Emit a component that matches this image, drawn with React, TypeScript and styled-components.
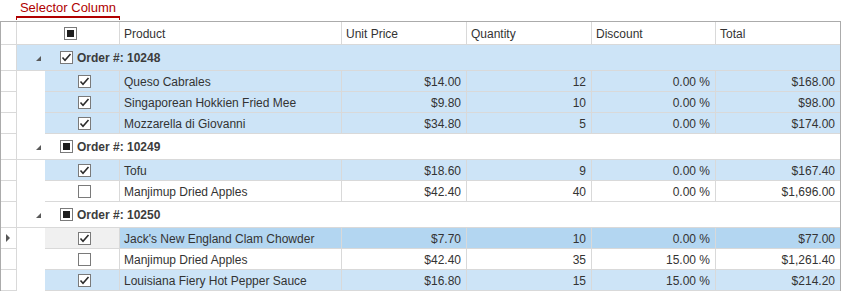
import styled, { createGlobalStyle } from "styled-components";

const GlobalStyle = createGlobalStyle`
  body {
    margin: 0;
    background: #ffffff;
    font-family: "Segoe UI", "Liberation Sans", Arial, sans-serif;
  }
`;

type CheckState = "on" | "off" | "mixed";

type OrderItem = {
  product: string;
  price: string;
  qty: number;
  discount: string;
  total: string;
  checked: boolean;
  focused?: boolean;
};

type Order = {
  id: number;
  state: CheckState;
  items: OrderItem[];
};

const orders: Order[] = [
  {
    id: 10248,
    state: "on",
    items: [
      { product: "Queso Cabrales", price: "$14.00", qty: 12, discount: "0.00 %", total: "$168.00", checked: true },
      { product: "Singaporean Hokkien Fried Mee", price: "$9.80", qty: 10, discount: "0.00 %", total: "$98.00", checked: true },
      { product: "Mozzarella di Giovanni", price: "$34.80", qty: 5, discount: "0.00 %", total: "$174.00", checked: true },
    ],
  },
  {
    id: 10249,
    state: "mixed",
    items: [
      { product: "Tofu", price: "$18.60", qty: 9, discount: "0.00 %", total: "$167.40", checked: true },
      { product: "Manjimup Dried Apples", price: "$42.40", qty: 40, discount: "0.00 %", total: "$1,696.00", checked: false },
    ],
  },
  {
    id: 10250,
    state: "mixed",
    items: [
      { product: "Jack's New England Clam Chowder", price: "$7.70", qty: 10, discount: "0.00 %", total: "$77.00", checked: true, focused: true },
      { product: "Manjimup Dried Apples", price: "$42.40", qty: 35, discount: "15.00 %", total: "$1,261.40", checked: false },
      { product: "Louisiana Fiery Hot Pepper Sauce", price: "$16.80", qty: 15, discount: "15.00 %", total: "$214.20", checked: true },
    ],
  },
];

const LINE = "#d9d9d9";
const SELECTED = "#cde4f7";
const FOCUSED = "#b3d6f1";

const Page = styled.div`
  width: 841px;
  color: #333333;
  font-size: 12px;
`;

const Caption = styled.div`
  height: 21px;
  display: flex;
`;

const CaptionLabel = styled.div`
  position: relative;
  margin-left: 16px;
  width: 104px;
  height: 18px;
  box-sizing: border-box;
  border-bottom: 2px solid #b00000;
  color: #b00000;
  font-size: 13px;
  line-height: 15px;
  text-align: center;

  &::before,
  &::after {
    content: "";
    position: absolute;
    bottom: -4px;
    width: 1px;
    height: 3px;
    background: #b00000;
  }
  &::before { left: 0; }
  &::after { right: 0; }
`;

const Grid = styled.div`
  width: 841px;
  box-sizing: border-box;
  border: 1px solid #ababab;
  border-bottom: none;
`;

const Row = styled.div<{ $height: number }>`
  display: flex;
  height: ${(p) => p.$height}px;
`;

const Indicator = styled.div`
  width: 16px;
  flex: none;
  box-sizing: border-box;
  border-right: 1px solid ${LINE};
  border-bottom: 1px solid ${LINE};
  display: flex;
  align-items: center;
  justify-content: center;
`;

const Indent = styled.div`
  width: 28px;
  flex: none;
  background: #ffffff;
`;

const Cell = styled.div<{ $w: number; $align?: "left" | "right"; $bg?: string; $last?: boolean }>`
  width: ${(p) => p.$w}px;
  flex: none;
  box-sizing: border-box;
  border-right: ${(p) => (p.$last ? "none" : `1px solid ${LINE}`)};
  border-bottom: 1px solid ${LINE};
  background: ${(p) => p.$bg ?? "#ffffff"};
  padding: 1px 5px 0 4px;
  display: flex;
  align-items: center;
  justify-content: ${(p) => (p.$align === "right" ? "flex-end" : "flex-start")};
  white-space: nowrap;
  overflow: hidden;
`;

const SelectCell = styled(Cell)`
  justify-content: center;
  padding: 0 0 0 4px;
`;

const GroupCell = styled.div<{ $bg: string }>`
  flex: 1;
  box-sizing: border-box;
  border-bottom: 1px solid ${LINE};
  background: ${(p) => p.$bg};
  display: flex;
  align-items: center;
  padding-left: 19px;
  font-weight: bold;
  color: #3c3c3c;
`;

const Expander = styled.div`
  width: 0;
  height: 0;
  border-left: 5px solid transparent;
  border-bottom: 5px solid #595959;
  margin-top: 2px;
  margin-right: 19px;
`;

const GroupText = styled.span`
  margin-left: 4px;
  padding-top: 1px;
`;

const CurrentArrow = styled.div`
  width: 0;
  height: 0;
  border-top: 4px solid transparent;
  border-bottom: 4px solid transparent;
  border-left: 4px solid #555555;
  margin-left: -1px;
`;

const Box = styled.div`
  width: 13px;
  height: 13px;
  box-sizing: border-box;
  border: 1px solid #7a7a7a;
  background: #ffffff;
  display: flex;
  align-items: center;
  justify-content: center;
  flex: none;
`;

const Mixed = styled.div`
  width: 7px;
  height: 7px;
  background: #1e1e1e;
`;

const Check = ({ state }: { state: CheckState }) => (
  <Box>
    {state === "on" && (
      <svg width="11" height="11" viewBox="0 0 11 11">
        <polyline points="1.5,5.5 4,8.2 9.5,2" fill="none" stroke="#2b2b2b" strokeWidth="1.6" />
      </svg>
    )}
    {state === "mixed" && <Mixed />}
  </Box>
);

const cols = [
  { title: "Product", w: 222 },
  { title: "Unit Price", w: 125 },
  { title: "Quantity", w: 125 },
  { title: "Discount", w: 124 },
  { title: "Total", w: 124 },
];

const ItemRow = ({ item }: { item: OrderItem }) => {
  const bg = item.focused ? FOCUSED : item.checked ? SELECTED : "#ffffff";
  const selBg = item.focused ? "#f0f0f0" : bg;
  return (
    <Row $height={21}>
      <Indicator>{item.focused && <CurrentArrow />}</Indicator>
      <Indent />
      <SelectCell $w={75} $bg={selBg}>
        <Check state={item.checked ? "on" : "off"} />
      </SelectCell>
      <Cell $w={222} $bg={bg}>{item.product}</Cell>
      <Cell $w={125} $bg={bg} $align="right">{item.price}</Cell>
      <Cell $w={125} $bg={bg} $align="right">{item.qty}</Cell>
      <Cell $w={124} $bg={bg} $align="right">{item.discount}</Cell>
      <Cell $w={124} $bg={bg} $align="right" $last>{item.total}</Cell>
    </Row>
  );
};

export default function App() {
  return (
    <Page>
      <GlobalStyle />
      <Caption>
        <CaptionLabel>Selector Column</CaptionLabel>
      </Caption>
      <Grid>
        <Row $height={23}>
          <Indicator />
          <SelectCell $w={103}>
            <Check state="mixed" />
          </SelectCell>
          {cols.map((c, i) => (
            <Cell key={c.title} $w={c.w} $last={i === cols.length - 1}>
              {c.title}
            </Cell>
          ))}
        </Row>
        {orders.map((o) => (
          <div key={o.id}>
            <Row $height={26}>
              <Indicator />
              <GroupCell $bg={o.state === "on" ? SELECTED : "#ffffff"}>
                <Expander />
                <Check state={o.state} />
                <GroupText>Order #: {o.id}</GroupText>
              </GroupCell>
            </Row>
            {o.items.map((it, i) => (
              <ItemRow key={i} item={it} />
            ))}
          </div>
        ))}
      </Grid>
    </Page>
  );
}
